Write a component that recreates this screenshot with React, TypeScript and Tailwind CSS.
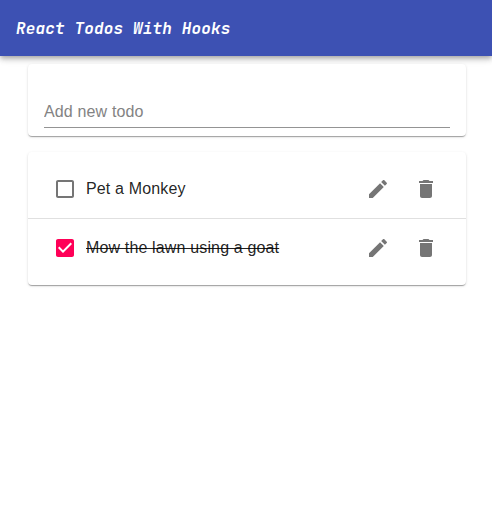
import React, { useState } from "react";

type Todo = { id: number; task: string; completed: boolean };

const initialTodos: Todo[] = [
  { id: 1, task: "Pet a Monkey", completed: false },
  { id: 2, task: "Mow the lawn using a goat", completed: true },
];

const paper =
  "rounded-[4px] bg-white shadow-[0px_2px_1px_-1px_rgba(0,0,0,0.2),0px_1px_1px_0px_rgba(0,0,0,0.14),0px_1px_3px_0px_rgba(0,0,0,0.12)]";

function Icon({ d }: { d: string }) {
  return (
    <svg viewBox="0 0 24 24" className="block size-6 shrink-0 fill-current">
      <path d={d} />
    </svg>
  );
}

const UNCHECKED =
  "M19 5v14H5V5h14m0-2H5c-1.1 0-2 .9-2 2v14c0 1.1.9 2 2 2h14c1.1 0 2-.9 2-2V5c0-1.1-.9-2-2-2z";
const CHECKED =
  "M19 3H5c-1.11 0-2 .9-2 2v14c0 1.1.89 2 2 2h14c1.11 0 2-.9 2-2V5c0-1.1-.89-2-2-2zm-9 14l-5-5 1.41-1.41L10 14.17l7.59-7.59L19 8l-9 9z";
const EDIT =
  "M3 17.25V21h3.75L17.81 9.94l-3.75-3.75L3 17.25zM20.71 7.04c.39-.39.39-1.02 0-1.41l-2.34-2.34c-.39-.39-1.02-.39-1.41 0l-1.83 1.83 3.75 3.75 1.83-1.83z";
const DELETE =
  "M6 19c0 1.1.9 2 2 2h8c1.1 0 2-.9 2-2V7H6v12zM19 4h-3.5l-1-1h-5l-1 1H5v2h14V4z";

export default function App() {
  const [todos, setTodos] = useState(initialTodos);
  const toggle = (id: number) =>
    setTodos(todos.map((t) => (t.id === id ? { ...t, completed: !t.completed } : t)));
  const remove = (id: number) => setTodos(todos.filter((t) => t.id !== id));

  return (
    <div className="min-h-screen bg-white font-['Liberation_Sans',Arial,sans-serif] text-base text-black/87">
      <header className="flex h-14 items-center bg-[#3d51b3] px-4 pt-0.5 shadow-[0px_2px_4px_-1px_rgba(0,0,0,0.2),0px_4px_5px_0px_rgba(0,0,0,0.14),0px_1px_10px_0px_rgba(0,0,0,0.12)]">
        <h1 className="font-['JetBrains_Mono','Liberation_Mono',monospace] text-base font-bold italic tracking-[0.15px] text-white">
          React Todos With Hooks
        </h1>
      </header>
      <main className="flex flex-col gap-4 pt-2 pr-[26px] pl-7">
        <form className={`${paper} h-[72px] px-4 pt-8`}>
          <input
            placeholder="Add new todo"
            className="block h-8 w-full border-b border-[#949494] bg-transparent pt-px tracking-[0.15px] outline-none placeholder:text-[#838383]"
          />
        </form>
        <ul className={`${paper} py-2`}>
          {todos.map((t) => (
            <li
              key={t.id}
              className="flex h-[59px] items-center border-b border-black/12 pr-7 pl-[25px] last:h-[58px] last:border-b-0"
            >
              <button
                onClick={() => toggle(t.id)}
                className={t.completed ? "text-[#ff0057]" : "text-black/54"}
              >
                <Icon d={t.completed ? CHECKED : UNCHECKED} />
              </button>
              <span
                className={`ml-[9px] flex-1 tracking-[0.15px] ${t.completed ? "line-through" : ""}`}
              >
                {t.task}
              </span>
              <div className="flex gap-6 text-black/54">
                <button aria-label="Edit">
                  <Icon d={EDIT} />
                </button>
                <button aria-label="Delete" onClick={() => remove(t.id)}>
                  <Icon d={DELETE} />
                </button>
              </div>
            </li>
          ))}
        </ul>
      </main>
    </div>
  );
}
